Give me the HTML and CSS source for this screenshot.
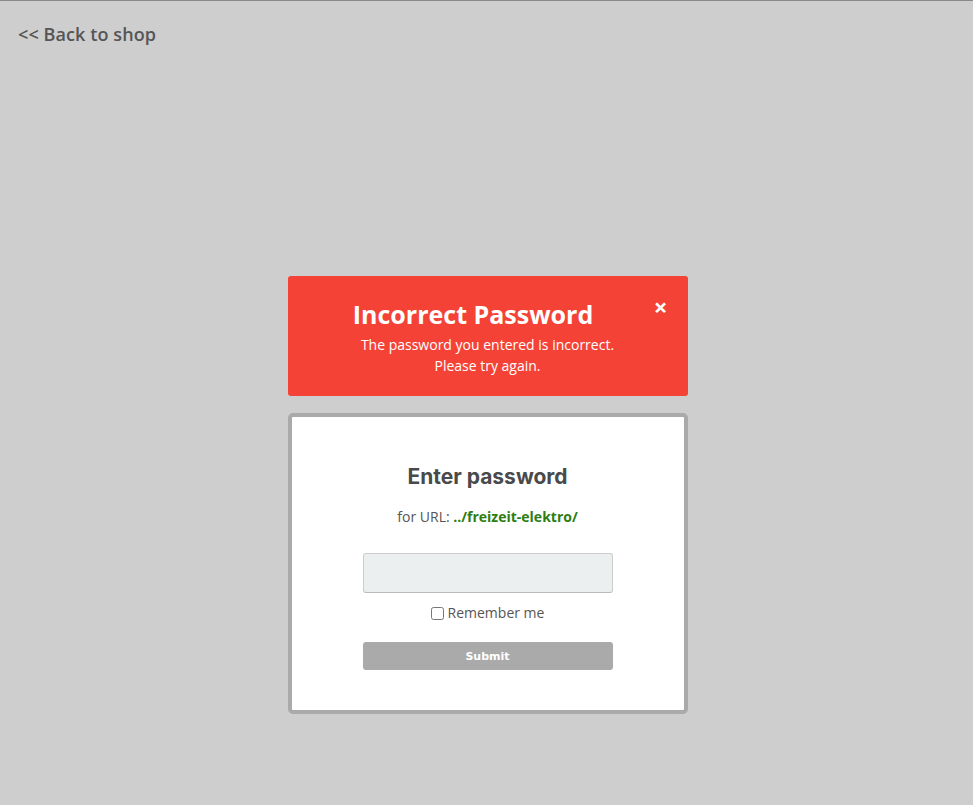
FILE: index.html
```html
<!DOCTYPE html>
<html lang="en">
<head>
<meta charset="utf-8">
<title>Enter password</title>
<link rel="stylesheet" href="styles.css">
</head>
<body>
<header class="top">
  <a class="back" href="#">&lt;&lt; Back to shop</a>
</header>
<main class="main">
  <div class="alert">
    <div class="alert-title"><span class="close">&times;</span>Incorrect Password</div>
    <p class="alert-text">The password you entered is incorrect.<br>Please try again.</p>
  </div>
  <form class="card">
    <h1 class="card-title">Enter password</h1>
    <p class="url">for URL: <strong class="url-path">../freizeit-elektro/</strong></p>
    <input class="pw" type="password">
    <label class="remember"><input class="cb" type="checkbox">Remember me</label>
    <button class="submit" type="button">Submit</button>
  </form>
</main>
</body>
</html>
```
FILE: styles.css
```css
html, body { margin: 0; padding: 0; }
body {
  background: #cecece;
  border-top: 1px solid #8a8a8a;
  min-height: 804px;
  font-family: "Open Sans", "Liberation Sans", sans-serif;
  color: #555;
}
.top { padding: 21px 18px 0; }
.back {
  display: inline-block;
  font-size: 18px;
  line-height: 24px;
  font-weight: 600;
  letter-spacing: 0.1px;
  color: #555;
  text-decoration: none;
}
.main {
  display: flex;
  flex-direction: column;
  align-items: center;
  padding: 230px 0 0 2px;
}
.alert {
  width: 400px;
  box-sizing: border-box;
  background: #f44336;
  color: #fff;
  border-radius: 3px;
  padding: 20px 15px 20px;
  text-align: center;
}
.alert-title {
  font-size: 25px;
  line-height: 36px;
  font-weight: 700;
}
.close {
  float: right;
  width: 29px;
  box-sizing: border-box;
  padding-left: 5px;
  font-size: 24px;
  line-height: 24px;
  font-weight: 700;
  text-align: center;
  margin-top: -1px;
}
.alert-text {
  margin: 2px 0 0;
  font-size: 14px;
  line-height: 21px;
}
.card {
  margin-top: 17px;
  width: 400px;
  box-sizing: border-box;
  background: #fff;
  border: 4px solid #aaa;
  border-radius: 5px;
  padding: 47px 0 40px;
  display: flex;
  flex-direction: column;
  align-items: center;
}
.card-title {
  margin: 0;
  font-family: Inter, "Liberation Sans", sans-serif;
  font-size: 21px;
  line-height: 25px;
  font-weight: 700;
  color: #4a4a4a;
}
.url {
  margin: 18px 0 0;
  font-size: 14px;
  line-height: 20px;
  color: #555;
}
.url-path { color: #2e7d0f; font-weight: 700; }
.pw {
  margin: 26px 0 0;
  width: 250px;
  height: 40px;
  box-sizing: border-box;
  background: #ecefef;
  border: 1px solid #ccc;
  border-bottom-color: #bbb;
  border-radius: 3px;
}
.remember {
  margin-top: 10px;
  display: flex;
  align-items: center;
  font-size: 14px;
  line-height: 20px;
  color: #555;
}
.cb { margin: 0 4px 0 0; width: 13px; height: 13px; }
.submit {
  margin-top: 19px;
  width: 250px;
  height: 28px;
  background: #aaa;
  border: 0;
  border-radius: 3px;
  color: #fff;
  font-family: "DejaVu Sans", Verdana, sans-serif;
  font-size: 11px;
  font-weight: 700;
}
```
